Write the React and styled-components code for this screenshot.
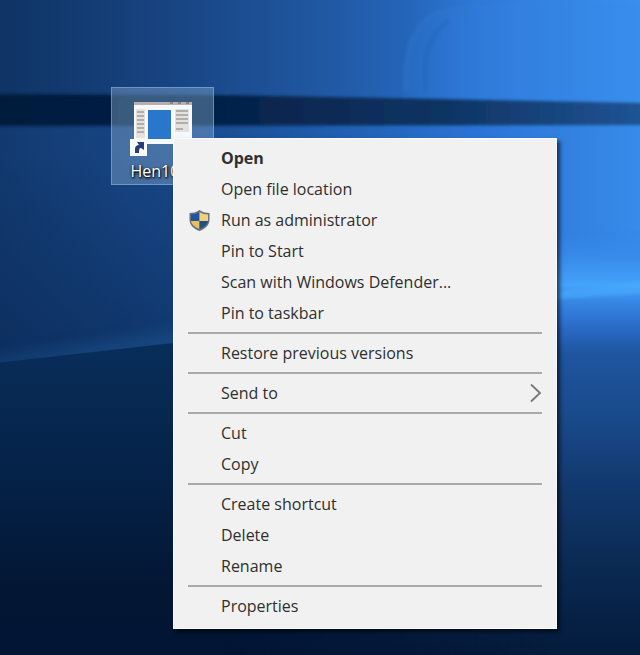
import React from "react";
import styled, { createGlobalStyle } from "styled-components";

const GlobalStyle = createGlobalStyle`
  * { box-sizing: border-box; }
  body { margin: 0; background: #04193b; }
`;

const Desktop = styled.main`
  position: relative;
  min-height: 100vh;
  overflow: hidden;
  font-family: "Open Sans", "Noto Sans", sans-serif;
`;

const WallpaperArt = styled.svg`
  position: absolute;
  inset: 0;
  width: 100%;
  height: 100%;
`;

const Shortcut = styled.button`
  position: absolute;
  left: 111px;
  top: 87px;
  width: 103px;
  height: 98px;
  display: flex;
  flex-direction: column;
  align-items: center;
  gap: 1px;
  padding: 10px 0 0;
  border: 1px solid rgba(150, 190, 230, 0.5);
  background: rgba(150, 184, 218, 0.38);
  font: inherit;
`;

const ShortcutLabel = styled.span`
  width: 64px;
  text-align: left;
  font-size: 16px;
  line-height: 20px;
  color: #fff;
  text-shadow: 1px 1px 2px #000, 0 1px 3px #000;
`;

const Menu = styled.div`
  position: absolute;
  left: 173px;
  top: 138px;
  width: 60vw;
  padding: 4px 0 6px;
  border: 1px solid #f8fafc;
  background: #f1f1f1;
  box-shadow: 3px 3px 4px rgba(0, 0, 0, 0.6);
`;

const MenuItem = styled.button`
  display: grid;
  grid-template-columns: 47px 1fr 14px;
  align-items: center;
  width: 100%;
  height: 31px;
  padding: 0 14px 1px 0;
  border: 0;
  background: transparent;
  color: #2f2f2f;
  font-family: inherit;
  font-size: 16px;
  font-weight: ${(p) => (p.$primary ? 700 : 400)};
  line-height: 20px;
  text-align: left;
  white-space: nowrap;
  &:hover { background: #fff; }
`;

const IconCell = styled.span`
  display: flex;
  padding-left: 14px;
`;

const Separator = styled.hr`
  height: 2px;
  margin: 3px 14px 4px;
  border: 0;
  background: #a9a9a9;
`;

function Wallpaper() {
  return (
    <WallpaperArt viewBox="0 0 640 655" preserveAspectRatio="none" aria-hidden="true">
      <defs>
        <linearGradient id="sky">
          <stop offset="0" stopColor="#0f3465" />
          <stop offset="0.25" stopColor="#174380" />
          <stop offset="0.48" stopColor="#1f569e" />
          <stop offset="0.63" stopColor="#2464b8" />
          <stop offset="0.75" stopColor="#2f79d8" />
          <stop offset="1" stopColor="#3b91ee" />
        </linearGradient>
        <linearGradient id="pane">
          <stop offset="0" stopColor="#123a70" />
          <stop offset="0.27" stopColor="#184888" />
          <stop offset="0.5" stopColor="#1f5cab" />
          <stop offset="0.75" stopColor="#2b74d6" />
          <stop offset="1" stopColor="#378be9" />
        </linearGradient>
        <linearGradient id="beam">
          <stop offset="0" stopColor="#021b3c" />
          <stop offset="0.4" stopColor="#06244c" />
          <stop offset="0.7" stopColor="#0e3564" />
          <stop offset="1" stopColor="#205495" />
        </linearGradient>
        <linearGradient id="shade" x1="0" y1="0" x2="0" y2="1">
          <stop offset="0" stopColor="#041c42" stopOpacity="0" />
          <stop offset="1" stopColor="#041c42" stopOpacity="0.4" />
        </linearGradient>
        <linearGradient id="floor" x1="0" y1="0" x2="0" y2="1">
          <stop offset="0" stopColor="#0b3262" />
          <stop offset="0.2" stopColor="#082c57" />
          <stop offset="0.5" stopColor="#052248" />
          <stop offset="0.8" stopColor="#031735" />
          <stop offset="1" stopColor="#021433" />
        </linearGradient>
        <linearGradient id="right" gradientUnits="userSpaceOnUse" x1="0" y1="230" x2="0" y2="655">
          <stop offset="0" stopColor="#3585e5" stopOpacity="0" />
          <stop offset="0.07" stopColor="#388deb" />
          <stop offset="0.13" stopColor="#44a3fb" />
          <stop offset="0.17" stopColor="#3686e4" />
          <stop offset="0.23" stopColor="#2a6bc6" />
          <stop offset="0.29" stopColor="#1e569f" />
          <stop offset="0.42" stopColor="#1a4c8e" />
          <stop offset="0.6" stopColor="#12396e" />
          <stop offset="0.8" stopColor="#0a2951" />
          <stop offset="1" stopColor="#041b3c" />
        </linearGradient>
        <linearGradient id="fade">
          <stop offset="0.35" stopColor="#000" />
          <stop offset="0.86" stopColor="#fff" />
        </linearGradient>
        <mask id="rightMask"><rect width="640" height="655" fill="url(#fade)" /></mask>
        <filter id="soft"><feGaussianBlur stdDeviation="1.5" /></filter>
        <filter id="glow" x="-50%" y="-50%" width="200%" height="200%"><feGaussianBlur stdDeviation="7" /></filter>
      </defs>
      <rect width="640" height="655" fill="#061f49" />
      <rect width="640" height="125" fill="url(#sky)" />
      <path d="M402 88 C402 35 419 9 455 7 L640 0 V104 L402 98Z" fill="#3185e8" opacity=".18" filter="url(#soft)" />
      <path d="M407 92 C401 43 424 12 450 10 C468 9 471 15 474 21" fill="none" stroke="#3976bb" strokeWidth="5" opacity=".22" filter="url(#soft)" />
      <path d="M426 90 C422 58 428 35 449 20" fill="none" stroke="#174d9b" strokeWidth="5" opacity=".14" filter="url(#soft)" />
      <rect y="120" width="640" height="260" fill="url(#pane)" />
      <rect y="150" width="240" height="215" fill="url(#shade)" />
      <path d="M-5 94 L220 95 L645 103 V125 L-5 126Z" fill="url(#beam)" filter="url(#soft)" />
      <path d="M-20 360 L190 329 V350 L-20 369Z" fill="#23609f" opacity=".4" filter="url(#glow)" />
      <path d="M-5 363 L173 343 L645 288 V660 H-5Z" fill="url(#floor)" />
      <rect y="230" width="640" height="425" fill="url(#right)" mask="url(#rightMask)" />
      <path d="M545 293 L650 281 V293 L545 300Z" fill="#4aadff" opacity=".5" filter="url(#soft)" />
    </WallpaperArt>
  );
}

function ProgramIcon() {
  return (
    <svg width="66" height="62" viewBox="0 0 66 62" aria-hidden="true">
      <path d="M4 5H62V46H4Z" fill="#f7f8fa" />
      <path d="M4 4H62V7H4Z" fill="#b9aeb0" />
      <path d="M40 5H43M48 5H51M56 5H59" stroke="#8d838b" strokeWidth="2" />
      <path d="M6 11H15V40H6ZM45 11H59V34H45Z" fill="#e4e2df" />
      <path d="M7 14H14M7 18H14M7 22H14M7 26H14M7 30H14M7 34H14M46 13H58M46 17H58M46 21H58M46 25H58M46 31H53" stroke="#b1aeac" strokeWidth="2" />
      <path d="M18 12H41V41H18Z" fill="#2877cc" />
      <path d="M0 41H17V58H0Z" fill="#f9fafc" />
      <path d="M5 55V51C5 48 7 47 9 47L7 44H14V52L11 50C9 50 9 52 9 55Z" fill="#263f78" />
    </svg>
  );
}

function ShieldIcon() {
  return (
    <svg width="23" height="23" viewBox="0 0 23 23" aria-hidden="true">
      <path d="M11.5 1C8 3.4 5 4 1.5 4V11C1.5 16 6 20 11.5 22C17 20 21.5 16 21.5 11V4C18 4 15 3.4 11.5 1Z" fill="#65737e" />
      <path d="M11.5 3C8.4 4.8 6 5.4 3 5.5V12H11.5Z" fill="#1e569e" />
      <path d="M11.5 3C14.6 4.8 17 5.4 20 5.5V12H11.5Z" fill="#f2cf79" />
      <path d="M3 12H11.5V20C6.8 18.2 3.5 15.5 3 12Z" fill="#edbd5d" />
      <path d="M20 12H11.5V20C16.2 18.2 19.5 15.5 20 12Z" fill="#234f87" />
    </svg>
  );
}

function SubmenuArrow() {
  return (
    <svg width="14" height="20" viewBox="0 0 14 20" aria-hidden="true">
      <path d="M3 1.5L12 10L3 18.5" fill="none" stroke="#777" strokeWidth="1.8" />
    </svg>
  );
}

const groups = [
  [
    { label: "Open", primary: true },
    { label: "Open file location" },
    { label: "Run as administrator", icon: <ShieldIcon /> },
    { label: "Pin to Start" },
    { label: "Scan with Windows Defender..." },
    { label: "Pin to taskbar" },
  ],
  [{ label: "Restore previous versions" }],
  [{ label: "Send to", submenu: true }],
  [{ label: "Cut" }, { label: "Copy" }],
  [{ label: "Create shortcut" }, { label: "Delete" }, { label: "Rename" }],
  [{ label: "Properties" }],
];

export default function App() {
  return (
    <Desktop>
      <GlobalStyle />
      <Wallpaper />
      <Shortcut type="button">
        <ProgramIcon />
        <ShortcutLabel>Hen10</ShortcutLabel>
      </Shortcut>
      <Menu role="menu" aria-label="Shortcut options">
        {groups.map((items, index) => (
          <React.Fragment key={items[0].label}>
            {index > 0 && <Separator />}
            {items.map((item) => (
              <MenuItem
                key={item.label}
                type="button"
                role="menuitem"
                aria-haspopup={item.submenu ? "menu" : undefined}
                $primary={item.primary}
              >
                <IconCell>{item.icon}</IconCell>
                <span>{item.label}</span>
                {item.submenu && <SubmenuArrow />}
              </MenuItem>
            ))}
          </React.Fragment>
        ))}
      </Menu>
    </Desktop>
  );
}
